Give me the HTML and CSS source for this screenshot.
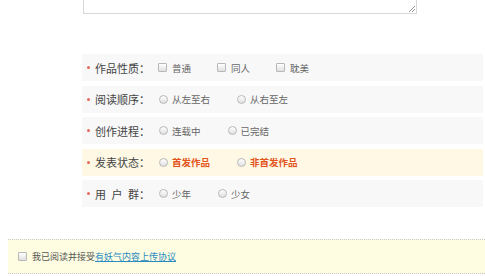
FILE: index.html
```html
<!DOCTYPE html>
<html>
<head>
  <title>上传作品</title>
  <link rel="stylesheet" href="styles.css">
</head>
<body>
  <div class="editor">
    <svg class="grip" width="9" height="9" viewBox="0 0 9 9"><path d="M8 2 L2 8 M8 5 L5 8" stroke="#999" stroke-width="1"/></svg>
  </div>

  <div class="fields">
    <div class="row">
      <span class="dot"></span>
      <span class="label">作品性质：</span>
      <label class="opt"><span class="box"></span>普通</label>
      <label class="opt"><span class="box"></span>同人</label>
      <label class="opt"><span class="box"></span>耽美</label>
    </div>
    <div class="row">
      <span class="dot"></span>
      <span class="label">阅读顺序：</span>
      <label class="opt"><span class="circle"></span>从左至右</label>
      <label class="opt"><span class="circle"></span>从右至左</label>
    </div>
    <div class="row">
      <span class="dot"></span>
      <span class="label">创作进程：</span>
      <label class="opt"><span class="circle"></span>连载中</label>
      <label class="opt"><span class="circle"></span>已完结</label>
    </div>
    <div class="row row-warn">
      <span class="dot"></span>
      <span class="label">发表状态：</span>
      <label class="opt opt-strong"><span class="circle"></span>首发作品</label>
      <label class="opt opt-strong"><span class="circle"></span>非首发作品</label>
    </div>
    <div class="row">
      <span class="dot"></span>
      <span class="label label-spaced">用 户 群：</span>
      <label class="opt"><span class="circle"></span>少年</label>
      <label class="opt"><span class="circle"></span>少女</label>
    </div>
  </div>

  <div class="agree">
    <span class="box"></span>
    <span>我已阅读并接受<a href="#">有妖气内容上传协议</a></span>
  </div>
</body>
</html>
```

FILE: styles.css
```css
body {
  margin: 0;
  background: #fff;
  font-family: "Noto Sans CJK SC", "Liberation Sans", sans-serif;
  color: #555;
  width: 485px;
  overflow: hidden;
}

.editor {
  position: relative;
  margin-left: 83px;
  width: 332px;
  height: 13px;
  border: 1px solid #d8d8d8;
  border-top: none;
}
.grip {
  position: absolute;
  right: 0;
  bottom: 0;
}

.fields {
  margin-top: 40px;
  margin-left: 82px;
  width: 401px;
  display: flex;
  flex-direction: column;
  gap: 4.5px;
}

.row {
  height: 27px;
  background: #f8f8f8;
  display: flex;
  align-items: center;
  padding-left: 5px;
}
.row-warn { background: #fef8e4; }

.dot {
  width: 3px;
  height: 3px;
  border-radius: 50%;
  background: #e8675a;
  margin-right: 5px;
}

.label {
  width: 63px;
  font-size: 11px;
  color: #444;
}
.label-spaced { word-spacing: 3px; }

.opt {
  display: flex;
  align-items: center;
  font-size: 9.5px;
  color: #666;
  margin-right: 26px;
}
.opt-strong {
  color: #e2541c;
  font-weight: bold;
}

.box, .circle {
  width: 7px;
  height: 7px;
  border: 1px solid #b8b8b8;
  background: linear-gradient(#fff, #e0e0e0);
  margin-right: 5px;
  flex: none;
}
.box { border-radius: 1px; }
.circle {
  border-radius: 50%;
  margin-left: 1px;
  margin-right: 4px;
}

.agree {
  margin-top: 32px;
  margin-left: 8px;
  height: 33px;
  background: #fefde2;
  border-top: 1px dotted #c8c8c8;
  border-bottom: 1px dotted #c8c8c8;
  display: flex;
  align-items: center;
  padding-left: 10px;
  font-size: 9px;
  color: #555;
}
.agree .box { margin-right: 5px; }
.agree a {
  color: #2a8bbf;
  text-decoration: underline;
}
```
